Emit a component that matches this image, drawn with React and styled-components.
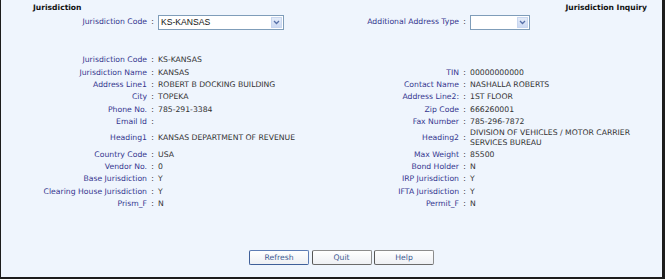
import React from 'react';
import styled, { createGlobalStyle } from 'styled-components';

const GlobalStyle = createGlobalStyle`
    html, body {
        margin: 0;
        padding: 0;
        background: #ffffff;
    }
    body {
        font-family: "DejaVu Sans", Verdana, sans-serif;
    }
`

const leftRows = [
    ['Jurisdiction Code', 'KS-KANSAS'],
    ['Jurisdiction Name', 'KANSAS'],
    ['Address Line1', 'ROBERT B DOCKING BUILDING'],
    ['City', 'TOPEKA'],
    ['Phone No.', '785-291-3384'],
    ['Email Id', ''],
    ['Heading1', 'KANSAS DEPARTMENT OF REVENUE'],
    ['Country Code', 'USA'],
    ['Vendor No.', '0'],
    ['Base Jurisdiction', 'Y'],
    ['Clearing House Jurisdiction', 'Y'],
    ['Prism_F', 'N'],
]

const rightRows = [
    null,
    ['TIN', '00000000000'],
    ['Contact Name', 'NASHALLA ROBERTS'],
    ['Address Line2:', '1ST FLOOR'],
    ['Zip Code', '666260001'],
    ['Fax Number', '785-296-7872'],
    ['Heading2', 'DIVISION OF VEHICLES / MOTOR CARRIER SERVICES BUREAU'],
    ['Max Weight', '85500'],
    ['Bond Holder', 'N'],
    ['IRP Jurisdiction', 'Y'],
    ['IFTA Jurisdiction', 'Y'],
    ['Permit_F', 'N'],
]

const Chevron = () => (
    <svg width="7" height="5" viewBox="0 0 7 5">
        <path d="M1 1 L3.5 3.5 L6 1" fill="none" stroke="#5770a8" strokeWidth="1.3" />
    </svg>
)

const Dropdown = ({ value, width }) => (
    <SelectBox width={width}>
        <SelectValue>{value}</SelectValue>
        <SelectArrow><Chevron /></SelectArrow>
    </SelectBox>
)

const App = () => {
    return (
        <>
            <GlobalStyle />
            <Frame>
                <TitleBar>
                    <Title>Jurisdiction</Title>
                    <Title>Jurisdiction Inquiry</Title>
                </TitleBar>
                <Filters>
                    <Label>Jurisdiction Code</Label>
                    <Colon>:</Colon>
                    <Value><Dropdown value="KS-KANSAS" width={126} /></Value>
                    <Label>Additional Address Type</Label>
                    <Colon>:</Colon>
                    <Value><Dropdown value="" width={60} /></Value>
                </Filters>
                <Details>
                    {leftRows.map((left, i) => {
                        const right = rightRows[i]
                        return (
                            <React.Fragment key={i}>
                                <Label>{left[0]}</Label>
                                <Colon>:</Colon>
                                <Value>{left[1]}</Value>
                                <Label>{right ? right[0] : ''}</Label>
                                <Colon>{right ? ':' : ''}</Colon>
                                <Value wrap>{right ? right[1] : ''}</Value>
                            </React.Fragment>
                        )
                    })}
                </Details>
                <ButtonBar>
                    <Button focused>Refresh</Button>
                    <Button>Quit</Button>
                    <Button>Help</Button>
                </ButtonBar>
            </Frame>
        </>
    );
}

const Frame = styled.div`
    width: 665px;
    height: 279px;
    box-sizing: border-box;
    background: #eff5fd;
    border-left: 1px solid #1c1c1c;
    border-right: 3px solid #1c1c1c;
    border-bottom: 2px solid #1c1c1c;
    display: flex;
    flex-direction: column;
    font-size: 7.7px;
`

const TitleBar = styled.div`
    display: flex;
    justify-content: space-between;
    align-items: center;
    height: 14px;
    padding: 0 15px 0 32px;
`

const Title = styled.span`
    font-weight: bold;
    font-size: 7.6px;
    color: #111111;
`

const FormGrid = styled.div`
    display: grid;
    grid-template-columns: 146px 11px 172px 129px 11px 180px;
    align-items: center;
`

const Filters = styled(FormGrid)`
    height: 16px;
`

const Details = styled(FormGrid)`
    margin-top: 24px;
    grid-auto-rows: minmax(12.4px, auto);
`

const Label = styled.div`
    text-align: right;
    color: #35358f;
    line-height: 10px;
    white-space: nowrap;
`

const Colon = styled.div`
    text-align: center;
    color: #333333;
    line-height: 10px;
`

const Value = styled.div`
    color: #333333;
    line-height: 10px;
    white-space: ${props => (props.wrap ? 'normal' : 'nowrap')};
`

const SelectBox = styled.div`
    width: ${props => props.width}px;
    height: 15px;
    box-sizing: border-box;
    border: 1px solid #7f9db9;
    background: #ffffff;
    display: flex;
    align-items: center;
    padding: 1px;
`

const SelectValue = styled.span`
    flex: 1;
    padding-left: 1px;
    font-family: "Liberation Sans", Arial, sans-serif;
    font-size: 8.6px;
    color: #111111;
`

const SelectArrow = styled.span`
    width: 11px;
    height: 11px;
    box-sizing: border-box;
    border: 1px solid #c9d7f0;
    background: linear-gradient(#e4ecf9, #cddaf3);
    display: flex;
    align-items: center;
    justify-content: center;
`

const ButtonBar = styled.div`
    margin-top: auto;
    display: flex;
    justify-content: center;
    gap: 2.5px;
    padding: 0 0 12px 20px;
`

const Button = styled.div`
    width: 60px;
    height: 15px;
    box-sizing: border-box;
    border: 1px solid ${props => (props.focused ? '#5d7cb4' : '#8c8c8c')};
    border-left-color: ${props => (props.focused ? '#3f5f99' : '#555555')};
    border-bottom-color: ${props => (props.focused ? '#3f5f99' : '#6a6a6a')};
    border-radius: 2px;
    background: linear-gradient(#ffffff, #eef0f4);
    color: #3c5a92;
    display: flex;
    align-items: center;
    justify-content: center;
    font-size: 7.7px;
`

export default App
